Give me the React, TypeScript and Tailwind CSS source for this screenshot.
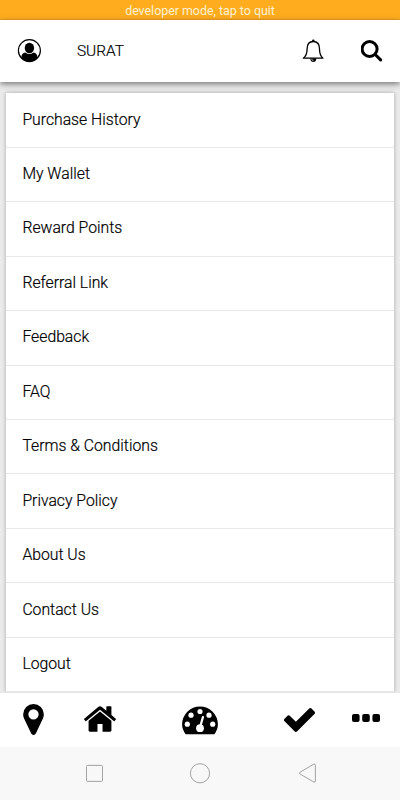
import React from "react";

const rows = [
  "Purchase History",
  "My Wallet",
  "Reward Points",
  "Referral Link",
  "Feedback",
  "FAQ",
  "Terms & Conditions",
  "Privacy Policy",
  "About Us",
  "Contact Us",
  "Logout",
];

function UserIcon() {
  return (
    <svg className="ml-[17px] size-6 shrink-0" viewBox="0 0 24 24">
      <circle cx="12.4" cy="11.6" r="11" fill="none" stroke="#000" strokeWidth="1.2" />
      <ellipse cx="12.4" cy="9" rx="4.7" ry="5.2" />
      <path d="M8.3 13.5 Q12.4 16.6 16.5 13.5 C19 14 20.2 15.5 20.6 18.7 Q17 22.8 12.4 22.8 T4.2 18.7 C4.6 15.5 5.8 14 8.3 13.5Z" />
    </svg>
  );
}

function BellIcon() {
  return (
    <svg className="h-6 w-[22px] shrink-0" viewBox="0 0 22 24">
      <path
        d="M1.3 19.2 C4.6 16.8 5.1 14 5.1 10 C5.1 5.2 7.5 2.5 11.3 2.5 S17.5 5.2 17.5 10 C17.5 14 18 16.8 21 19.2Z"
        fill="none"
        stroke="#000"
        strokeWidth="1.3"
        strokeLinejoin="round"
      />
      <path d="M10 2.5 V1.8 Q10 .6 11.3 .6 T12.6 1.8 V2.5Z M8.2 19.5 H14.4 Q14 23 11.3 23 T8.2 19.5Z" />
      <path d="M9.7 20 Q10 21.6 11.4 21.7" stroke="#fff" strokeWidth=".7" fill="none" />
    </svg>
  );
}

function SearchIcon() {
  return (
    <svg className="mr-[17px] size-[22px] shrink-0" viewBox="0 0 22 22" fill="none" stroke="#000">
      <circle cx="8.6" cy="9" r="7.5" strokeWidth="3" />
      <path d="M14.2 14.5 L19.6 19.8" strokeWidth="3.1" strokeLinecap="round" />
    </svg>
  );
}

function MarkerIcon() {
  return (
    <svg className="h-[31px] w-[21px]" viewBox="0 0 1024 1536">
      <path
        transform="translate(0 1408) scale(1 -1)"
        d="M768 896q0 106 -75 181t-181 75t-181 -75t-75 -181t75 -181t181 -75t181 75t75 181zM1024 896q0 -109 -33 -179l-364 -774q-16 -33 -47.5 -52t-67.5 -19t-67.5 19t-46.5 52l-365 774q-33 70 -33 179q0 212 150 362t362 150t362 -150t150 -362z"
      />
    </svg>
  );
}

function HomeIcon() {
  return (
    <svg className="h-[26px] w-8" viewBox="25 0 1614 1283">
      <path
        transform="translate(0 1283) scale(1 -1)"
        d="M1408 544v-480q0 -26 -19 -45t-45 -19h-384v384h-256v-384h-384q-26 0 -45 19t-19 45v480q0 1 .5 3t.5 3l575 474l575 -474q1 -2 1 -6zM1631 613l-62 -74q-8 -9 -21 -11h-3q-13 0 -21 7l-692 577l-692 -577q-12 -8 -24 -7q-13 2 -21 11l-62 74q-8 10 -7 23.5t11 21.5l719 599q32 26 76 26t76 -26l244 -204v195q0 14 9 23t23 9h192q14 0 23 -9t9 -23v-408l219 -182q10 -8 11 -21.5t-7 -23.5z"
      />
    </svg>
  );
}

function GaugeIcon() {
  return (
    <svg className="h-[29px] w-9" viewBox="0 0 36 29">
      <path d="M3.6 28.2 Q.1 23.6 .1 18.3 A17.9 17.9 0 0 1 35.9 18.3 Q35.9 23.6 32.4 28.2Z" />
      <g fill="#fff">
        <circle cx="5.3" cy="18.2" r="2.6" />
        <circle cx="9" cy="9.2" r="2.6" />
        <circle cx="18" cy="5.5" r="2.6" />
        <circle cx="27" cy="9.2" r="2.6" />
        <circle cx="30.7" cy="18.2" r="2.6" />
        <circle cx="18" cy="22.2" r="3.9" />
      </g>
      <path d="M18.4 20 L20.9 11.2" stroke="#fff" strokeWidth="2.3" strokeLinecap="round" />
    </svg>
  );
}

function CheckIcon() {
  return (
    <svg className="h-6 w-[31px]" viewBox="121 0 1550 1188">
      <path
        transform="translate(0 1202) scale(1 -1)"
        d="M1671 970q0 -40 -28 -68l-724 -724l-136 -136q-28 -28 -68 -28t-68 28l-136 136l-362 362q-28 28 -28 68t28 68l136 136q28 28 68 28t68 -28l294 -295l656 657q28 28 68 28t68 -28l136 -136q28 -28 28 -68z"
      />
    </svg>
  );
}

function MoreIcon() {
  return (
    <svg className="h-2 w-7" viewBox="0 0 28 8">
      <rect width="7.6" height="8" rx="2" />
      <rect x="10.2" width="7.6" height="8" rx="2" />
      <rect x="20.4" width="7.6" height="8" rx="2" />
    </svg>
  );
}

export default function App() {
  return (
    <div className="flex h-[800px] w-[400px] flex-col overflow-hidden bg-[#ebebeb] font-[Roboto,sans-serif] text-black">
      <div className="h-5 shrink-0 border-b border-[#f7a21c] bg-[#ffad1f] pt-px text-center text-[12.4px] leading-5 text-[#fff0d2]">
        developer mode, tap to quit
      </div>
      <header className="z-10 flex h-[62px] shrink-0 items-center bg-white shadow-[0_2px_6px_rgba(0,0,0,0.5)]">
        <UserIcon />
        <span className="ml-9 pb-px text-[15.4px] font-light leading-5 [-webkit-text-stroke:0.2px_#000]">SURAT</span>
        <div className="ml-auto flex items-center gap-[37px] pb-px">
          <BellIcon />
          <SearchIcon />
        </div>
      </header>
      <main className="min-h-0 flex-1 overflow-hidden px-1.5 pt-[11.4px]">
        <ul className="bg-white shadow-[0_0_4px_rgba(0,0,0,0.3)]">
          {rows.map((label) => (
            <li
              key={label}
              className="flex h-[54.45px] items-center border-b border-[#e9e9e9] pl-[16.4px] pb-px text-[15.75px] font-light leading-6 [-webkit-text-stroke:0.2px_#000]"
            >
              {label}
            </li>
          ))}
        </ul>
      </main>
      <nav className="flex h-[55px] shrink-0 items-center border-t border-[#e5e5e5] bg-white">
        <div className="ml-[23px] pb-0.5"><MarkerIcon /></div>
        <div className="ml-10 pb-0.5"><HomeIcon /></div>
        <div className="ml-[66px]"><GaugeIcon /></div>
        <div className="ml-[66.4px]"><CheckIcon /></div>
        <div className="ml-[36.6px] pb-1"><MoreIcon /></div>
      </nav>
      <footer className="h-[53px] shrink-0 bg-[#f8f8f8]">
        <svg className="h-[53px] w-[400px]" viewBox="0 0 400 53" fill="none" stroke="#999" strokeWidth=".9">
          <rect x="86.5" y="18.4" width="16" height="16" rx="1" />
          <circle cx="200" cy="26.3" r="9.6" />
          <path d="M300 25.2 L313.8 17.2 Q315.4 16.6 315.4 18.3 V34 Q315.4 35.7 313.8 35 L300 27 Q298.8 26.1 300 25.2Z" />
        </svg>
      </footer>
    </div>
  );
}
